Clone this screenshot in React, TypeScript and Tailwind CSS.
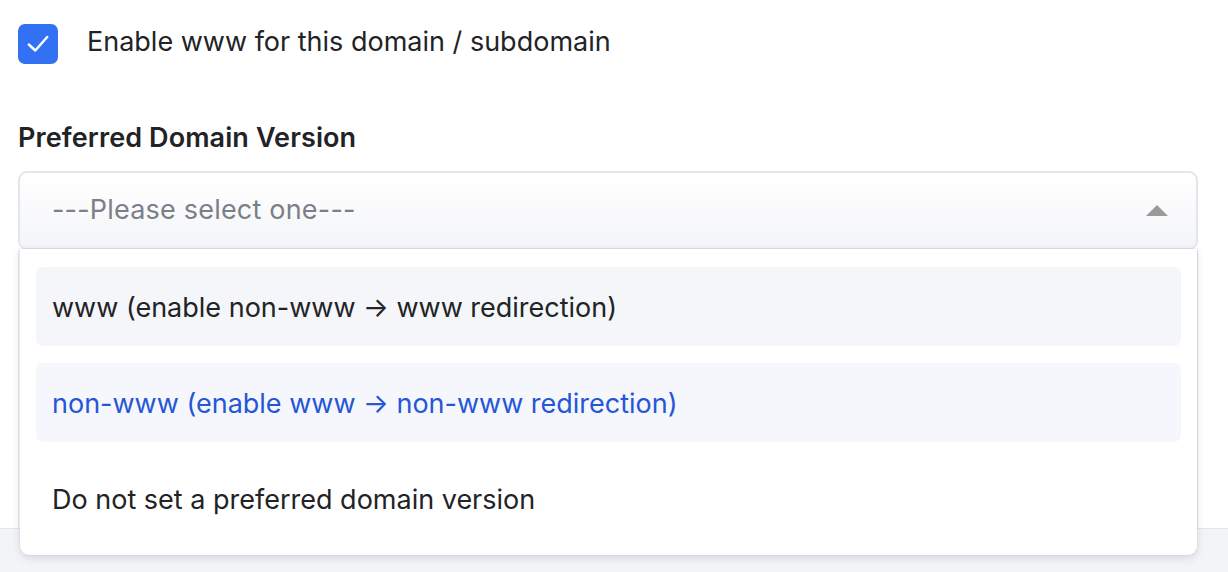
import { useState } from 'react'

const OPTIONS = [
  { label: 'www (enable non-www → www redirection)', value: 'www' },
  { label: 'non-www (enable www → non-www redirection)', value: 'non-www' },
  { label: 'Do not set a preferred domain version', value: 'none' },
]

export default function App() {
  const [enabled, setEnabled] = useState(true)
  const [hover] = useState('www')
  const [selected] = useState('non-www')

  return (
    <div className="min-h-[572px] w-full bg-[#f3f4f8] overflow-hidden" style={{ fontFamily: 'Inter, "Noto Sans", sans-serif' }}>
      <div className="relative bg-white h-[529px] border-b border-[#e4e6eb]">
        {/* Checkbox row */}
        <label className="flex items-center gap-[29px] pl-[18px] pt-[24px] cursor-pointer">
          <button
            type="button"
            onClick={() => setEnabled(!enabled)}
            className="w-[40px] h-[40px] rounded-[7px] bg-[#3270f4] flex items-center justify-center"
          >
            {enabled && (
              <svg width="26" height="26" viewBox="0 0 24 24" fill="none">
                <path d="M3.5 12.5 L9.5 18 L20.5 5.5" stroke="white" strokeWidth="2.3" strokeLinecap="round" strokeLinejoin="round" />
              </svg>
            )}
          </button>
          <span className="text-[27px] text-[#222326] leading-[40px] -mt-[4px]">Enable www for this domain / subdomain</span>
        </label>

        {/* Preferred version */}
        <div className="px-[18px] mt-[56px] w-[1216px]">
          <div className="text-[27px] font-semibold text-[#222326] leading-[36px] tracking-[0.1px]">Preferred Domain Version</div>
          <div className="relative mt-[15px]">
            <div className="h-[79px] rounded-[9px] border-2 border-[#e3e6ec] bg-gradient-to-b from-white to-[#f4f5f8] flex items-center justify-between pl-[32px] pr-[28px]">
              <span className="text-[27px] text-[#7c7f88] tracking-[0.2px]">---Please select one---</span>
              <svg width="22" height="11" viewBox="0 0 22 11">
                <path d="M0 11 L11 0 L22 11 Z" fill="#9a9a9a" />
              </svg>
            </div>
            {/* underlying area borders */}
            <div className="h-[279px] border-x border-[#e8eaee]" />

            {/* Dropdown menu */}
            <div className="absolute left-[2px] right-[1px] top-[78px] bg-white rounded-b-[9px] shadow-[0_3px_8px_rgba(30,40,60,0.14),0_0_0_1px_rgba(30,40,60,0.04)] px-[16px] pt-[18px] pb-[17px] flex flex-col gap-[17px] z-10">
              {OPTIONS.map(o => {
                const isSel = o.value === selected
                const isHover = o.value === hover
                return (
                  <div
                    key={o.value}
                    className={
                      'h-[79px] rounded-[7px] flex items-center pl-[16px] pt-[3px] text-[27px] ' +
                      (isSel ? 'bg-[#f6f7fc] text-[#2556d6]' : isHover ? 'bg-[#f5f6f9] text-[#222326]' : 'text-[#222326]')
                    }
                  >
                    {o.label}
                  </div>
                )
              })}
            </div>
          </div>
        </div>
      </div>
    </div>
  )
}
